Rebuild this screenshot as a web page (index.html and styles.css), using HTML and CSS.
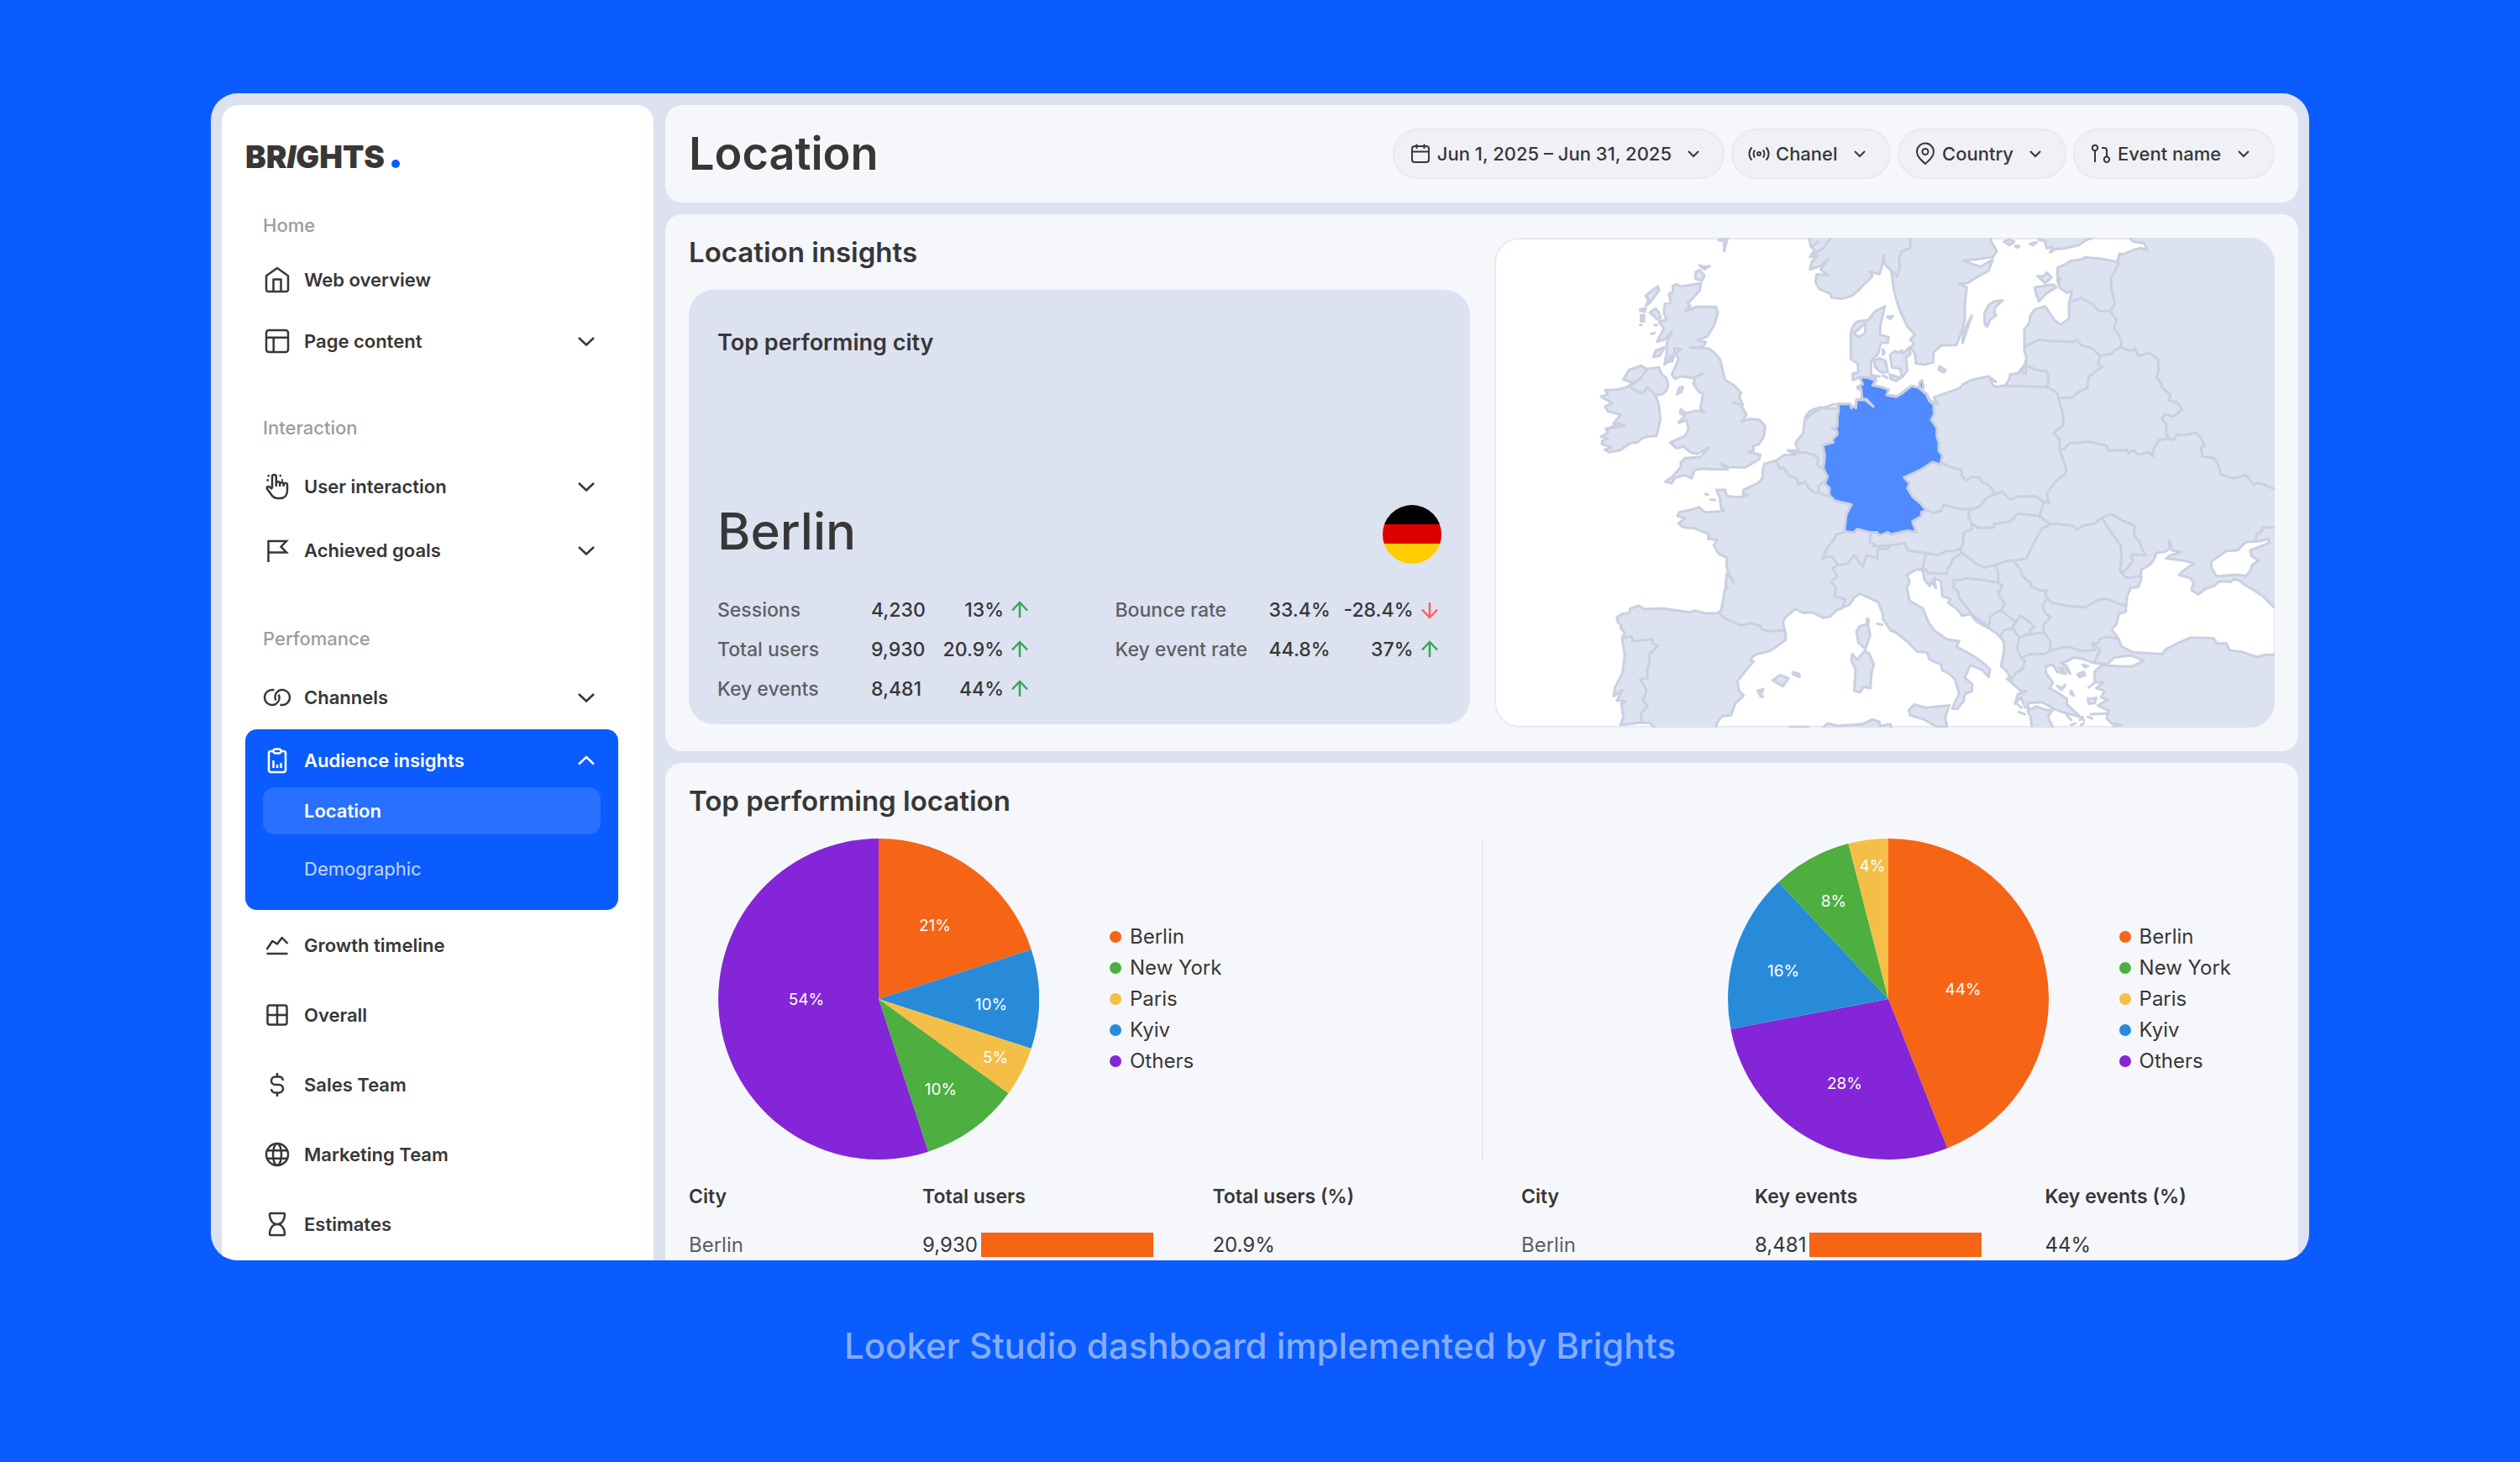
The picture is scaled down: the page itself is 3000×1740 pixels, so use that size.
FILE: index.html
```html
<!DOCTYPE html>
<html lang="en">
<head>
    <meta charset="UTF-8">
    <meta name="viewport" content="width=device-width, initial-scale=1.0">
    <title>Location</title>
    <link rel="stylesheet" href="styles.css">
</head>
<body>
    <div class="dashboard">
        <aside class="sidebar">
            <a class="logo" href="#">BR<i>I</i>GHTS<span class="logo-dot"></span></a>
            <nav>
                <div class="nav-group nav-group-home">
                    <h2 class="nav-label">Home</h2>
                    <a class="nav-item" href="#">
                        <svg class="icon" viewBox="0 0 34 34"><path d="M4 12.2 17 3l13 9.2V28.500a2.500 2.500 0 0 1-2.500 2.500h-21A2.500 2.500 0 0 1 4 28.500zM12.500 31V16.500h9V31"/></svg>
                        Web overview
                    </a>
                    <button class="nav-item" type="button">
                        <svg class="icon" viewBox="0 0 34 34"><rect x="4" y="4" width="26" height="26" rx="3"/><path d="M4 12.700h26M12.700 12.700V30"/></svg>
                        Page content
                        <svg class="chevron" viewBox="0 0 24 24"><path d="M3 8l9 8.500L21 8"/></svg>
                    </button>
                </div>
                <div class="nav-group">
                    <h2 class="nav-label">Interaction</h2>
                    <button class="nav-item" type="button">
                        <svg class="icon" viewBox="0 0 34 34"><path d="M11 19.500V5.300a2.400 2.400 0 0 1 4.800 0V16M15.800 17v-3.500a2.200 2.200 0 0 1 4.400 0V17M20.200 14.500a2.200 2.200 0 0 1 4.400 0V17M24.600 15a2.200 2.200 0 0 1 4.400.5V22c0 5.500-3.500 9-8.500 9h-3c-4 0-6-1.800-8-5l-4.700-6.500c-.8-2 1.500-3.300 3-2l3.200 2.500M7.500 5 6 3.500M7 9.500H4.500M20 5l1.500-1.800M22 9.500h2"/></svg>
                        User interaction
                        <svg class="chevron" viewBox="0 0 24 24"><path d="M3 8l9 8.500L21 8"/></svg>
                    </button>
                    <button class="nav-item" type="button">
                        <svg class="icon" viewBox="0 0 34 34"><path stroke-linejoin="miter" d="M6.500 31V6H28l-6.500 6.700L28 19.500H6.500"/></svg>
                        Achieved goals
                        <svg class="chevron" viewBox="0 0 24 24"><path d="M3 8l9 8.500L21 8"/></svg>
                    </button>
                </div>
                <div class="nav-group">
                    <h2 class="nav-label">Perfomance</h2>
                    <button class="nav-item" type="button">
                        <svg class="icon" viewBox="0 0 34 34"><path d="M13.500 8.300A9 9 0 1 0 15.500 24.800C19 22.500 20.500 18 18.800 13.500M20.500 25.700A9 9 0 1 0 18.500 9.200C15 11.500 13.500 16 15.200 20.500"/></svg>
                        Channels
                        <svg class="chevron" viewBox="0 0 24 24"><path d="M3 8l9 8.500L21 8"/></svg>
                    </button>
                    <div class="nav-open">
                        <button class="nav-item" type="button">
                            <svg class="icon" viewBox="0 0 34 34"><path d="M12 6H9.500A2.500 2.500 0 0 0 7 8.500v20A2.500 2.500 0 0 0 9.500 31h15a2.500 2.500 0 0 0 2.500-2.500v-20A2.500 2.500 0 0 0 24.500 6H22"/><rect x="12.500" y="3.500" width="9" height="5" rx="2.500"/><path d="M12.500 26v-9M17 26v-4M21.500 26v-6"/></svg>
                            Audience insights
                            <svg class="chevron" viewBox="0 0 24 24"><path d="M3 16.500L12 8l9 8.500"/></svg>
                        </button>
                        <ul class="subnav">
                            <li><a class="subnav-link active" href="#">Location</a></li>
                            <li><a class="subnav-link" href="#">Demographic</a></li>
                        </ul>
                    </div>
                    <div class="nav-pages">
                        <a class="nav-item" href="#">
                            <svg class="icon" viewBox="0 0 34 34"><path d="M4.500 22l6.800-10 5.700 3.500L22.700 8 29.500 15M4.500 27h25"/></svg>
                            Growth timeline
                        </a>
                        <a class="nav-item" href="#">
                            <svg class="icon" viewBox="0 0 34 34"><rect x="5.500" y="5.500" width="23" height="23" rx="2.500"/><path d="M17 5.500v23M5.500 17h23"/></svg>
                            Overall
                        </a>
                        <a class="nav-item" href="#">
                            <svg class="icon" viewBox="0 0 34 34"><path d="M17 3v4.500M17 26.500V31M24 12c-.3-3-2.200-4.500-5-4.500h-4c-3 0-5 2-5 4.700S12 17 15 17h4c3 0 5 2 5 4.800s-2 4.700-5 4.700h-4c-3 0-4.700-1.500-5-4.500"/></svg>
                            Sales Team
                        </a>
                        <a class="nav-item" href="#">
                            <svg class="icon" viewBox="0 0 34 34"><circle cx="17" cy="17" r="13"/><ellipse cx="17" cy="17" rx="5" ry="13"/><path d="M5 12.200h24M5 21.800h24"/></svg>
                            Marketing Team
                        </a>
                        <a class="nav-item" href="#">
                            <svg class="icon" viewBox="0 0 34 34"><path d="M9.500 4h15a1.500 1.500 0 0 1 1.500 1.500C26 11 23 17 17 17S8 11 8 5.500A1.500 1.500 0 0 1 9.500 4zM17 17c6 0 9 6 9 11.500a1.500 1.500 0 0 1-1.500 1.500h-15A1.500 1.500 0 0 1 8 28.500C8 23 11 17 17 17z"/></svg>
                            Estimates
                        </a>
                    </div>
                </div>
            </nav>
        </aside>

        <main class="content">
            <header class="card page-header">
                <h1>Location</h1>
                <div class="filters">
                    <button class="filter" type="button">
                        <svg class="filter-icon" viewBox="0 0 28 28"><rect x="4" y="5" width="20" height="19" rx="3"/><path d="M4 11.500h20M9.500 2.500V8M18.500 2.500V8"/></svg>
                        Jun 1, 2025 – Jun 31, 2025
                        <svg class="filter-chevron" viewBox="0 0 24 24"><path d="M6 9l6 6 6-6"/></svg>
                    </button>
                    <label class="filter">
                        <svg class="filter-icon" viewBox="0 0 28 28"><circle cx="14" cy="14" r="2"/><path d="M5.500 6.500C1.500 10.500 1.500 17.500 5.500 21.500M9.200 9.500c-2.200 2.500-2.200 6.500 0 9M18.800 9.500c2.200 2.500 2.200 6.500 0 9M22.500 6.500c4 4 4 11 0 15"/></svg>
                        <select aria-label="Chanel"><option>Chanel</option></select>
                        <svg class="filter-chevron" viewBox="0 0 24 24"><path d="M6 9l6 6 6-6"/></svg>
                    </label>
                    <label class="filter">
                        <svg class="filter-icon" viewBox="0 0 28 28"><path d="M14 26C9 21.500 4 17 4 11.500a10 10 0 0 1 20 0C24 17 19 21.500 14 26z"/><circle cx="14" cy="11.500" r="3.500"/></svg>
                        <select aria-label="Country"><option>Country</option></select>
                        <svg class="filter-chevron" viewBox="0 0 24 24"><path d="M6 9l6 6 6-6"/></svg>
                    </label>
                    <label class="filter">
                        <svg class="filter-icon" viewBox="0 0 28 28"><circle cx="7" cy="7" r="3.200"/><path d="M7 10.200V24M15 7h3a3 3 0 0 1 3 3v7.500"/><circle cx="21" cy="20.700" r="3.200"/></svg>
                        <select aria-label="Event name"><option>Event name</option></select>
                        <svg class="filter-chevron" viewBox="0 0 24 24"><path d="M6 9l6 6 6-6"/></svg>
                    </label>
                </div>
            </header>

            <section class="card insights">
                <div class="insights-info">
                    <h2 class="card-title">Location insights</h2>
                    <div class="city-card">
                        <h3>Top performing city</h3>
                        <div class="city">
                            <p class="city-name">Berlin</p>
                            <div class="flag"><span></span><span></span><span></span></div>
                        </div>
                        <div class="stats">
                            <table class="stats-table">
                                <tr><th>Sessions</th><td>4,230</td><td class="change">13%<svg class="arrow" viewBox="0 0 28 28"><path d="M14 23V5M5 14.500L14 5l9 9.500"/></svg></td></tr>
                                <tr><th>Total users</th><td>9,930</td><td class="change">20.9%<svg class="arrow" viewBox="0 0 28 28"><path d="M14 23V5M5 14.500L14 5l9 9.500"/></svg></td></tr>
                                <tr><th>Key events</th><td>8,481</td><td class="change">44%<svg class="arrow" viewBox="0 0 28 28"><path d="M14 23V5M5 14.500L14 5l9 9.500"/></svg></td></tr>
                            </table>
                            <table class="stats-table">
                                <tr><th>Bounce rate</th><td>33.4%</td><td class="change">-28.4%<svg class="arrow down" viewBox="0 0 28 28"><path d="M14 5v18M5 13.500L14 23l9-9.500"/></svg></td></tr>
                                <tr><th>Key event rate</th><td>44.8%</td><td class="change">37%<svg class="arrow" viewBox="0 0 28 28"><path d="M14 23V5M5 14.500L14 5l9 9.500"/></svg></td></tr>
                            </table>
                        </div>
                    </div>
                </div>

                <div class="map">
                    <svg viewBox="0 0 930 583" role="img" aria-label="Map of Europe">
                        <rect class="map-frame" x="1" y="1" width="928" height="581" rx="29"/>
                        <g transform="translate(-8 -13) scale(.3333 .389)">
                            <!-- Scandinavia -->
                            <path class="land" d="M1145 20L1155 60 1168 70 1152 92 1180 88 1160 105 1152 130 1190 120 1218 98 1190 130 1215 148 1175 145 1172 170 1185 190 1225 205 1228 216 1265 220 1300 212 1325 195 1340 180 1365 160 1375 150 1365 137 1400 145 1410 118 1415 85 1420 115 1443 135 1450 185 1460 220 1475 260 1500 305 1527 330 1510 345 1525 358 1512 368 1528 390 1530 418 1560 422 1593 415 1593 385 1620 363 1675 362 1690 330 1705 285 1705 240 1712 185 1683 173 1715 172 1740 158 1790 135 1805 100 1760 122 1700 104 1760 98 1805 92 1820 75 1800 45 1795 20z"/>
                            <path class="border" d="M1510 30V65L1480 75 1470 95 1473 125 1463 152 1443 135M1228 30L1200 65 1165 85M1180 45L1160 60"/>
                            <!-- Western mainland -->
                            <path class="land" d="M1465 520L1425 515 1432 500 1405 490 1375 485 1388 470 1350 460 1330 460 1340 480 1322 495 1338 500 1340 525 1318 530 1316 555 1300 550 1296 542 1250 542 1250 555 1215 556 1190 552 1160 560 1140 575 1132 595 1128 630 1100 662 1112 685 1072 684 1100 698 1060 698 1030 716 990 725 984 740 982 770 965 785 915 805 912 818 930 820 900 828 855 824 848 805 818 805 830 830 834 860 845 870 778 874 755 858 735 864 685 874 678 885 705 892 682 908 700 920 735 922 790 940 788 955 820 958 808 975 825 1000 853 1012 856 1050 880 1088 855 1060 850 1100 858 1106 848 1110 835 1175 820 1183 780 1183 740 1175 720 1180 625 1168 560 1170 540 1160 510 1168 505 1182 480 1185 462 1195 465 1210 478 1220 475 1228 490 1242 480 1258 490 1310 482 1365 455 1410 450 1437 482 1418 462 1450 492 1452 478 1460 485 1500 475 1525 540 1518 578 1518 605 1540 815 1540 820 1518 838 1498 870 1495 885 1458 915 1435 898 1420 893 1390 950 1330 938 1325 955 1310 1010 1298 1065 1265 1065 1245 1055 1210 1065 1195 1100 1170 1130 1182 1160 1180 1200 1197 1225 1193 1245 1175 1295 1155 1310 1135 1330 1123 1395 1148 1412 1185 1412 1200 1440 1235 1475 1248"/>
                            <!-- Iberia, France, Benelux, Alps borders -->
                            <path class="border" d="M485 1258L515 1253 518 1268 590 1263 590 1275 608 1283 575 1310 580 1330 570 1355 572 1382 545 1385 568 1418 555 1450 572 1468 548 1490 550 1515M830 1185L850 1200 905 1220 940 1213 975 1222 980 1232 1005 1238 1060 1235M1030 716L1045 740 1060 738 1075 760 1105 770 1110 788 1135 780 1145 798 1165 812 1185 815 1220 825M1185 815L1182 795 1200 780M1085 692L1130 690 1165 698 1182 708 1178 730 1200 742M1275 935L1245 942 1240 955 1215 980 1195 1018 1212 1008 1232 1010 1250 1035 1285 1032 1310 1005 1340 1040 1355 1005 1395 1015 1392 990 1410 985 1365 965 1368 935M1250 1035L1232 1045 1250 1070 1228 1085 1245 1105 1240 1130 1278 1140 1270 1160M1410 985L1430 985 1445 972 1492 970M1138 590L1170 560"/>
                        </g>
                        <g transform="translate(452 -13) scale(.3333 .389)">
                            <!-- Eastern mainland, Italy, Balkans, Anatolia -->
                            <path class="land" d="M60 515L85 520 105 505 135 487 160 492 190 512 200 530 230 543 215 522 305 495 320 482 350 468 410 458 437 475 418 468 425 485 440 490 470 485 485 465 487 452 515 448 540 420 546 400 538 380 538 315 555 295 560 270 575 253 612 243 645 285 668 300 698 280 697 235 708 195 690 202 665 188 655 160 668 162 655 150 657 125 690 112 700 105 750 98 752 93 810 97 870 107 878 82 890 85 930 70 955 65 978 72 965 50 925 45 905 20 1460 20 1460 1180 1435 1168 1390 1130 1350 1108 1325 1095 1305 1082 1285 1078 1275 1087 1235 1085 1215 1100 1185 1108 1160 1125 1135 1112 1143 1088 1130 1075 1090 1065 1110 1050 1145 1030 1110 1022 1045 1015 1060 1005 1100 995 1065 990 1055 960 1058 985 1040 995 1010 998 1000 1020 985 1035 955 1050 955 1080 945 1102 918 1105 905 1130 900 1178 875 1185 868 1215 850 1232 875 1262 885 1285 925 1302 1030 1308 1045 1292 1085 1275 1130 1258 1180 1258 1215 1260 1225 1275 1260 1275 1270 1295 1285 1298 1310 1300 1370 1317 1400 1310 1460 1310 1460 1550 850 1550 858 1528 885 1525 850 1520 832 1505 840 1482 800 1465 835 1448 812 1440 825 1420 795 1412 820 1395 790 1395 768 1410 790 1395 788 1362 810 1345 835 1338 785 1335 770 1330 745 1322 715 1318 690 1330 670 1335 690 1345 702 1368 680 1352 665 1350 685 1368 655 1362 640 1340 615 1345 615 1365 640 1395 628 1412 655 1425 690 1445 690 1462 735 1498 690 1490 650 1478 600 1455 550 1458 555 1475 540 1470 525 1440 505 1460 515 1430 545 1422 525 1420 475 1383 495 1392 475 1360 455 1345 465 1300 465 1270 440 1245 410 1228 370 1210 345 1185 315 1190 300 1172 265 1150 275 1140 245 1130 240 1085 215 1075 222 1105 205 1085 200 1100 180 1080 175 1052 155 1048 118 1065 128 1085 118 1105 128 1145 175 1168 195 1210 215 1235 260 1262 305 1268 295 1285 350 1310 395 1338 415 1355 410 1378 385 1355 345 1342 325 1380 352 1400 350 1422 325 1430 322 1450 300 1475 280 1475 290 1455 305 1430 290 1385 270 1368 245 1358 240 1340 200 1325 190 1303 155 1300 120 1270 70 1235 60 1235"/>
                            <!-- Azov and Marmara -->
                            <path class="sea" d="M1205 1025L1260 992 1300 990 1330 965 1380 962 1412 955 1412 968 1345 990 1350 1008 1375 1022 1352 1035 1345 1055 1330 1068 1290 1065 1225 1070 1208 1045zM830 1342L860 1318 920 1312 965 1328 925 1345 870 1345zM528 445L545 420 543 450z"/>
                            <!-- Sicily, Peloponnese, Finland -->
                            <path class="land" d="M125 1480L145 1462 185 1472 270 1465 255 1500 262 1530 225 1531 180 1508 130 1495zM550 1482L580 1468 615 1478 638 1480 622 1500 650 1550 568 1550 560 1500zM575 15L590 40 610 42 618 65 640 62 630 78 650 68 690 65 735 55 755 42 790 30 800 15z"/>
                            <!-- Baltic islands -->
                            <path class="land" d="M58 392L75 380 88 385 100 378 105 388 128 368 130 390 115 400 120 440 100 462 95 435 65 430zM57 452L95 462 80 472 60 465zM235 427L257 438 250 446 232 437zM395 265L410 240 430 228 460 225 435 245 430 262 437 270 415 285 405 305 397 300zM350 272L317 356 320 320zM575 185L640 176 652 185 615 205 590 228 580 205zM585 150L605 152 618 140 635 155 612 172zM465 45L485 38 502 45 485 56zM558 52L582 47 570 56zM505 58L520 60 512 63z"/>
                            <!-- Aegean and Ionian islands -->
                            <path class="land" d="M728 1370L750 1362 755 1372 735 1378zM745 1340L765 1345 755 1348zM655 1405L670 1418 685 1402 670 1412zM705 1420L715 1435 702 1428zM765 1445L795 1442 790 1458 768 1460zM690 1495L705 1510M720 1488L728 1500M735 1510L745 1500 750 1512M765 1500L780 1505M705 1525L720 1520M775 1492L830 1490M740 1525L750 1520M505 1455L528 1472M518 1485L540 1492"/>
                            <!-- Nordic and Baltic borders -->
                            <path class="border" d="M875 110L862 135 846 158 852 200 862 235 845 258M703 230L740 218 780 235 805 258 845 258M845 258L868 285 858 310 872 325 885 350 882 368M543 365L590 345 630 350 715 352 725 345 740 362 780 372 808 395 850 388 860 378 882 368M808 395L800 420 818 428 795 440 768 460 762 495 745 500 720 512 712 522 660 525M552 428L590 440 618 442 625 460 620 490 478 487M620 490L655 508 660 525 675 570 678 605 642 632 665 650 663 680"/>
                            <!-- Belarus and Ukraine borders -->
                            <path class="border" d="M882 368L915 380 935 372 945 395 985 385 1015 405 1018 440 1010 460 1028 480 1030 492 1060 515 1055 530 1085 538 1102 560 1070 580 1040 573 1030 588 1045 605 1045 635 1055 648M663 680L680 680 700 662 770 658 832 670 838 685 905 683 910 693 930 683 942 697 985 690 997 702 1000 680 1020 652 1050 648 1070 652 1085 635 1105 638 1150 630 1165 640 1182 670 1168 675 1175 703 1215 708 1230 725 1240 758 1285 770 1330 760 1358 790 1375 783 1440 805M1440 920L1390 920 1385 932 1368 940 1365 960M663 680L688 740 685 755 650 780 618 815 625 845M608 840L592 885 630 910M630 910L645 908 710 915 728 927 745 915 790 908 815 890 850 880 895 902 932 915 930 945 950 965 955 980 972 1005 920 1003 925 1025 895 1055 880 1055M815 890L840 925 882 975 885 1010 880 1055 905 1075 955 1068"/>
                            <!-- Central European borders -->
                            <path class="border" d="M240 722L275 735 315 745 312 758 330 778 350 765 380 768 385 780 410 790 435 818 460 810 485 835 520 825 580 825 608 842 625 845M435 818L405 828 375 858 342 865 300 862 250 850 240 870 210 875 187 865M342 865L338 885 350 908 350 925 322 935 318 970 310 985 315 998 280 1018 275 1035 265 1042 260 1062 195 1060 175 1040 185 1003M350 908L375 922 430 920 430 910 485 903 515 878 592 885M310 985L290 992 255 993 230 1005 120 990 112 968 60 975 0 978M630 910L600 925 570 970 545 1015 500 1022 480 1022 435 1035 395 1043 365 1030 315 998"/>
                            <!-- Balkan borders -->
                            <path class="border" d="M285 1080L310 1082 325 1075 385 1080 440 1088 460 1098 445 1120 450 1135 468 1150 455 1175 440 1178 415 1195 412 1225 355 1190 305 1135 300 1115 285 1105zM435 1035L445 1060 445 1088M500 1022L525 1050 530 1068 560 1090 560 1100 600 1115 620 1112 612 1125 635 1150 690 1160 755 1165 800 1142 830 1138 865 1150 900 1160M620 1135L603 1160 610 1180 632 1195 605 1220 608 1240 632 1270 630 1297 690 1285 745 1298 790 1295 780 1275 800 1275 810 1260 835 1255 875 1262M790 1280L808 1295 790 1330M630 1297L610 1308 560 1308 525 1320 512 1290 520 1258 545 1248 608 1242M520 1258L495 1225 525 1190 550 1205 575 1225 560 1230 555 1248M455 1175L505 1208M455 1250L465 1235 495 1230M525 1320L540 1328 530 1355 508 1365 495 1380M165 1048L180 1048"/>
                        </g>
                        <g transform="translate(-8 -13) scale(.3333 .389)">
                            <!-- Great Britain and Ireland -->
                            <path class="land" d="M662 180L672 176 690 182 762 173 758 195 715 235 724 242 706 258 745 245 815 245 823 262 810 300 785 335 750 347 780 352 770 368 725 370 790 372 810 385 830 405 848 468 880 485 907 510 898 518 912 545 878 538 905 545 925 575 908 597 935 588 970 590 992 610 988 640 970 665 950 670 950 685 930 688 975 698 970 712 920 737 858 735 832 725 858 742 800 742 765 740 740 745 728 770 705 760 670 768 658 785 635 780 660 765 690 735 690 722 705 708 760 705 790 675 750 695 725 690 700 672 675 678 652 660 705 640 718 618 710 592 682 600 705 578 688 570 690 558 708 570 745 563 775 566 760 555 770 510 755 505 735 480 742 460 768 450 735 463 690 458 670 465 658 452 682 405 672 385 692 375 668 372 665 400 655 395 642 415 632 422 640 385 640 355 658 320 632 345 605 352 630 310 612 290 640 285 630 265 633 235 655 232 648 205 662 200z"/>
                            <path class="land" d="M405 520L430 512 420 500 465 498 500 490 525 478 485 468 505 438 550 425 565 435 612 430 622 450 640 465 645 485 640 500 625 512 600 515 612 545 617 590 608 625 603 640 570 642 550 648 535 660 510 662 475 683 435 690 418 682 445 675 408 665 410 655 430 648 405 642 430 630 422 618 445 615 490 608 450 602 475 575 430 565 420 550 445 540 425 530z"/>
                            <path class="border" d="M570 435L545 465 505 485 525 500 555 510 570 490 600 515M430 618L470 600"/>
                            <!-- Scottish isles, Man, Channel Islands -->
                            <path class="land" d="M608 182L612 195 580 232 565 242 575 225 565 210zM545 252L565 250 560 260 545 256zM548 270L560 270 558 290 548 288zM545 300h5M580 262L600 250 612 262 618 280 605 282zM597 300h8M585 328L597 325M592 398L600 380 632 368 615 395zM645 412L660 400 660 412zM677 512L685 492 698 490 692 505zM744 138L758 132 775 150 765 165 742 158zM757 118L775 122 793 120 775 130zM826 40L858 34 845 75 845 45zM778 818L788 820M797 835L812 836"/>
                            <!-- Denmark -->
                            <path class="land" d="M1330 460L1305 470 1305 450 1325 445 1322 418 1298 405 1298 325 1305 305 1320 290 1360 285 1385 258 1420 243 1412 270 1403 300 1403 330 1433 338 1430 355 1405 355 1395 390 1370 410 1370 450 1388 462zM1380 410L1400 402 1422 410 1430 445 1405 445 1385 430zM1412 375L1418 385 1413 392zM1428 275L1448 273 1438 282zM1378 455L1400 458M1412 455L1428 462"/>
                            <path class="sea" d="M1310 325L1350 295 1350 325 1325 338z"/>
                            <path class="land" d="M1135 585L1150 565 1190 555 1160 572zM1205 552L1240 543"/>
                            <!-- Mediterranean islands and Maghreb -->
                            <path class="land" d="M1355 1200L1362 1202 1360 1220 1367 1250 1350 1292 1325 1272 1318 1240 1330 1222 1355 1217zM1348 1297L1365 1308 1380 1340 1372 1365 1368 1412 1345 1408 1330 1425 1310 1420 1315 1355 1300 1328 1303 1308 1320 1325zM1018 1388L1045 1372 1075 1382 1055 1406 1035 1396zM1090 1363L1112 1368 1115 1378 1092 1370zM965 1420L985 1415 975 1435zM975 1438L985 1438M1392 1215L1410 1218M1080 1540V1531H1145V1540M1190 1540L1215 1520 1250 1528 1340 1522 1375 1508 1400 1515 1402 1528 1440 1522 1445 1540z"/>
                            <!-- Germany -->
                            <path class="country-active" d="M1330 460L1360 462 1388 470 1375 485 1405 490 1433 498 1426 515 1460 520 1485 507 1515 487 1540 492 1568 512 1578 532 1594 545 1595 575 1585 590 1605 615 1605 640 1612 660 1612 685 1625 700 1618 728 1590 720 1545 745 1488 767 1508 785 1500 800 1520 828 1545 845 1568 868 1550 873 1550 885 1518 902 1532 935 1500 930 1440 942 1432 935 1400 945 1392 935 1365 935 1320 925 1310 935 1275 933 1282 880 1300 850 1240 838 1220 820 1222 800 1205 785 1215 765 1200 740 1205 700 1198 668 1235 660 1232 650 1250 635 1248 622 1230 618 1250 612 1250 585 1255 560 1252 542 1296 542 1300 555 1308 548 1316 555 1318 530 1350 530 1378 550 1355 528 1338 525 1335 495 1322 490 1340 482zM1543 475L1553 470 1558 492 1545 494z"/>
                        </g>
                    </svg>
                </div>
            </section>

            <section class="card locations">
                <h2 class="card-title">Top performing location</h2>
                <div class="charts">
                    <div class="chart">
                        <svg class="pie" viewBox="0 0 382 382">
                            <path fill="#f66415" d="M191 191V0A191 191 0 0 1 372.700 132z"/>
                            <path fill="#278bd9" d="M191 191L372.700 132A191 191 0 0 1 372.700 250z"/>
                            <path fill="#f3bf47" d="M191 191L372.700 250A191 191 0 0 1 345.500 303.300z"/>
                            <path fill="#4caf3f" d="M191 191L345.500 303.300A191 191 0 0 1 250 372.700z"/>
                            <path fill="#8425d7" d="M191 191L250 372.700A191 191 0 1 1 191 0z"/>
                            <text x="258" y="110">21%</text>
                            <text x="325" y="204">10%</text>
                            <text x="330" y="267">5%</text>
                            <text x="265" y="305">10%</text>
                            <text x="105" y="198">54%</text>
                        </svg>
                        <ul class="legend">
                            <li class="orange">Berlin</li>
                            <li class="green">New York</li>
                            <li class="yellow">Paris</li>
                            <li class="blue">Kyiv</li>
                            <li class="purple">Others</li>
                        </ul>
                    </div>
                    <div class="chart chart-right">
                        <svg class="pie" viewBox="0 0 382 382">
                            <path fill="#f66415" d="M191 191V0A191 191 0 0 1 261.300 368.600z"/>
                            <path fill="#8425d7" d="M191 191L261.300 368.600A191 191 0 0 1 3.400 226.800z"/>
                            <path fill="#278bd9" d="M191 191L3.400 226.800A191 191 0 0 1 60.300 51.800z"/>
                            <path fill="#4caf3f" d="M191 191L60.300 51.800A191 191 0 0 1 143.500 6z"/>
                            <path fill="#f3bf47" d="M191 191L143.500 6A191 191 0 0 1 191 0z"/>
                            <text x="280" y="186">44%</text>
                            <text x="139" y="298">28%</text>
                            <text x="66" y="164">16%</text>
                            <text x="126" y="81">8%</text>
                            <text x="172" y="39">4%</text>
                        </svg>
                        <ul class="legend">
                            <li class="orange">Berlin</li>
                            <li class="green">New York</li>
                            <li class="yellow">Paris</li>
                            <li class="blue">Kyiv</li>
                            <li class="purple">Others</li>
                        </ul>
                    </div>
                </div>
                <div class="tables">
                    <table class="city-table">
                        <thead>
                            <tr><th>City</th><th>Total users</th><th>Total users (%)</th></tr>
                        </thead>
                        <tbody>
                            <tr>
                                <td>Berlin</td>
                                <td><div class="bar-cell">9,930<span class="bar"></span></div></td>
                                <td>20.9%</td>
                            </tr>
                        </tbody>
                    </table>
                    <table class="city-table">
                        <thead>
                            <tr><th>City</th><th>Key events</th><th>Key events (%)</th></tr>
                        </thead>
                        <tbody>
                            <tr>
                                <td>Berlin</td>
                                <td><div class="bar-cell">8,481<span class="bar"></span></div></td>
                                <td>44%</td>
                            </tr>
                        </tbody>
                    </table>
                </div>
            </section>
        </main>
    </div>
    <p class="caption">Looker Studio dashboard implemented by Brights</p>
</body>
</html>
```

FILE: styles.css
```css
* {
    box-sizing: border-box;
}
body {
    display: flex;
    flex-direction: column;
    height: 100vh;
    margin: 0;
    padding: 111px 251px 0;
    background-color: #0a5cff;
    color: #373737;
    font-family: Inter, "Liberation Sans", sans-serif;
    font-size: 24px;
}
h1,
h2,
h3,
p,
ul {
    margin: 0;
    padding: 0;
}
ul {
    list-style: none;
}
a {
    color: inherit;
    text-decoration: none;
}
button,
select {
    border: none;
    background: none;
    color: inherit;
    font: inherit;
    cursor: pointer;
}
svg {
    display: block;
    flex: none;
    fill: none;
    stroke: currentColor;
}
.dashboard {
    display: flex;
    flex: 1;
    gap: 14px;
    min-height: 0;
    padding: 14px 13px 0;
    overflow: hidden;
    border-radius: 32px;
    background-color: #dde2f1;
}

/* Sidebar */
.sidebar {
    flex: none;
    width: 514px;
    padding: 43px 42px 0 28px;
    border-radius: 20px 20px 0 0;
    background-color: #fff;
}
.logo {
    display: flex;
    align-items: baseline;
    margin-bottom: 48px;
    font-size: 37px;
    font-weight: 900;
    line-height: 38px;
}
.logo-dot {
    width: 10px;
    height: 10px;
    margin-left: 8px;
    border-radius: 50%;
    background-color: #0a5cff;
}
.nav-group {
    --row: 76px;
    margin-bottom: 53px;
}
.nav-group-home {
    --row: 73px;
}
.nav-label {
    padding: 0 21px;
    margin-bottom: 18px;
    color: #9c9c9c;
    font-size: 22px;
    font-weight: 500;
    line-height: 28px;
}
.nav-group-home .nav-label {
    margin-bottom: 14px;
}
.nav-item {
    display: flex;
    align-items: center;
    gap: 15px;
    width: 100%;
    height: var(--row);
    padding: 0 26px 0 21px;
    font-size: 22px;
    font-weight: 600;
    text-align: left;
}
.icon {
    width: 34px;
    height: 34px;
    stroke-width: 2.5;
    stroke-linejoin: round;
}
.chevron {
    width: 24px;
    height: 24px;
    margin-left: auto;
    stroke-width: 2.5;
}
.nav-open {
    --row: 64px;
    padding: 5px 0 21px;
    border-radius: 14px;
    background-color: #0a5cff;
    color: #fff;
}
.subnav {
    display: grid;
    gap: 13px;
    padding: 0 21px;
}
.subnav-link {
    display: block;
    padding: 0 49px;
    border-radius: 14px;
    font-size: 22px;
    line-height: 56px;
    opacity: .75;
}
.subnav-link.active {
    background-color: #2970ff;
    font-weight: 600;
    opacity: 1;
}
.nav-pages {
    --row: 83px;
}

/* Header */
.content {
    display: flex;
    flex: 1;
    flex-direction: column;
    gap: 14px;
    min-width: 0;
}
.card {
    padding: 28px;
    border-radius: 20px;
    background-color: #f6f7fb;
}
.page-header {
    display: flex;
    align-items: center;
    justify-content: space-between;
}
.page-header h1 {
    font-size: 54px;
    font-weight: 600;
    line-height: 60px;
}
.filters {
    display: flex;
    gap: 8px;
}
.filter {
    display: flex;
    align-items: center;
    height: 60px;
    padding: 0 23px 0 17px;
    border: 2px solid #e6e9f6;
    border-radius: 30px;
    background-color: #f0f1f6;
    font-size: 22px;
    font-weight: 500;
}
.filter select {
    appearance: none;
    padding: 0;
}
.filter-icon {
    width: 28px;
    height: 28px;
    margin-right: 6px;
    stroke-width: 2;
}
.filter-chevron {
    width: 24px;
    height: 24px;
    margin-left: 14px;
    stroke-width: 2;
}

/* Location insights */
.insights {
    display: grid;
    grid-template-columns: 1fr 1fr;
    gap: 29px;
}
.card-title {
    font-size: 33px;
    font-weight: 600;
    line-height: 34px;
}
.insights-info {
    display: flex;
    flex-direction: column;
    gap: 28px;
    padding-bottom: 4px;
}
.city-card {
    display: flex;
    flex: 1;
    flex-direction: column;
    padding: 46px 34px 18px;
    border-radius: 30px;
    background-color: #dde2f1;
}
.city-card h3 {
    font-size: 27px;
    font-weight: 600;
    line-height: 34px;
}
.city {
    display: flex;
    justify-content: space-between;
    margin-top: auto;
    margin-bottom: 32px;
}
.city-name {
    font-size: 60px;
    font-weight: 500;
    line-height: 62px;
}
.flag {
    display: grid;
    width: 70px;
    height: 70px;
    overflow: hidden;
    border-radius: 50%;
    background-color: #ffce00;
}
.flag span:first-child {
    background-color: #000;
}
.flag span:nth-child(2) {
    background-color: #d00;
}
.stats {
    display: grid;
    grid-template-columns: 374px 388px;
    align-items: start;
    justify-content: space-between;
}
.stats-table,
.city-table {
    width: 100%;
    border-collapse: collapse;
    table-layout: fixed;
    text-align: left;
}
.stats-table th,
.stats-table td {
    height: 47px;
    padding: 0;
    font-size: 23px;
    font-weight: 500;
}
.stats-table th {
    width: 183px;
    color: #5d5f64;
    white-space: nowrap;
}
.stats-table td {
    width: 76px;
}
.stats-table .change {
    width: auto;
    text-align: right;
}
.arrow {
    display: inline-block;
    width: 28px;
    height: 28px;
    margin-left: 5px;
    color: #34a853;
    stroke-width: 2.5;
    vertical-align: text-bottom;
}
.arrow.down {
    color: #ff5f5f;
}

/* Map */
.map {
    overflow: hidden;
    border-radius: 30px;
}
.map svg {
    width: 100%;
    stroke: #cacfe1;
    stroke-width: 3;
    stroke-linejoin: round;
    stroke-linecap: round;
}
.map-frame {
    fill: #fff;
    stroke: #e6e9f6;
    stroke-width: 2;
}
.map path {
    vector-effect: non-scaling-stroke;
}
.land {
    fill: #dde2f1;
}
.sea {
    fill: #fff;
}
.country-active {
    fill: #4f8aff;
}

/* Top performing location */
.locations {
    flex: 1;
    min-height: 0;
    overflow: hidden;
    border-radius: 20px 20px 0 0;
}
.charts {
    display: grid;
    grid-template-columns: 1fr 1fr;
    margin: 28px 0 16px;
}
.chart {
    display: flex;
    align-items: center;
    gap: 84px;
    padding: 0 35px;
}
.chart-right {
    justify-content: flex-end;
    padding: 0 52px;
    border-left: 2px solid #e6e8ed;
}
.pie {
    width: 382px;
    height: 382px;
    stroke: none;
}
.pie text {
    fill: #fff;
    font-size: 19px;
    text-anchor: middle;
}
.legend li {
    display: flex;
    align-items: center;
    gap: 10px;
    line-height: 37px;
}
.legend li::before {
    content: "";
    width: 14px;
    height: 14px;
    border-radius: 50%;
    background-color: var(--dot);
}
.orange {
    --dot: #f66415;
}
.green {
    --dot: #4caf3f;
}
.yellow {
    --dot: #f3bf47;
}
.blue {
    --dot: #278bd9;
}
.purple {
    --dot: #8425d7;
}
.tables {
    display: grid;
    grid-template-columns: 1fr 1fr;
    gap: 94px;
}
.city-table th,
.city-table td {
    height: 57px;
    padding: 0;
}
.city-table th {
    font-size: 23px;
    font-weight: 600;
}
.city-table td:first-child {
    color: #5d5f64;
}
.city-table th:first-child {
    width: 31%;
}
.city-table th:nth-child(2) {
    width: 38.5%;
}
.bar-cell {
    display: flex;
    align-items: center;
}
.bar {
    width: 205px;
    height: 29px;
    margin-left: 4px;
    background-color: #f66415;
}

.caption {
    flex: none;
    height: 240px;
    color: #85adff;
    font-size: 42px;
    font-weight: 500;
    line-height: 204px;
    text-align: center;
}
```
